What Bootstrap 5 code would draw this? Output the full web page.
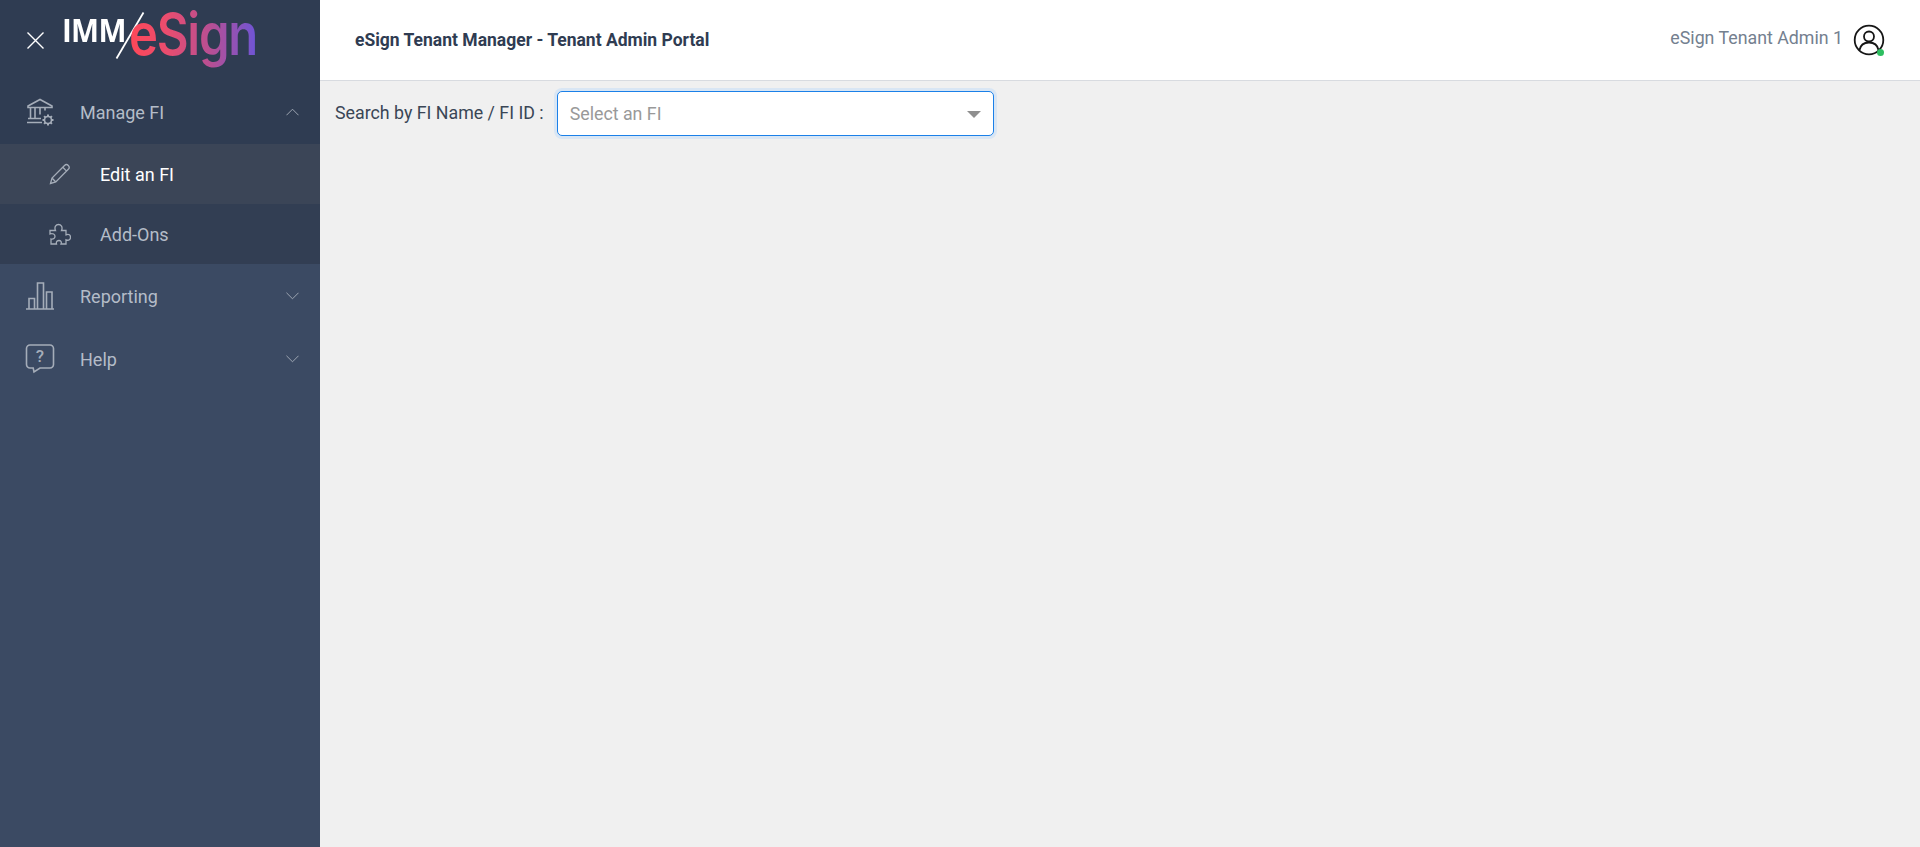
<!DOCTYPE html>
<html lang="en">
<head>
<meta charset="utf-8">
<title>eSign Tenant Manager</title>
<link href="https://cdn.jsdelivr.net/npm/bootstrap@5.3.0/dist/css/bootstrap.min.css" rel="stylesheet">
<style>
html,body{height:100%;overflow:hidden}
body{font-family:Roboto,"Liberation Sans",sans-serif;background:#f0f0f0;color:#2f3c52}
.app-side{width:320px;flex:none;background:#3b4a63}
.side-top{height:80px;background:#2f3c52;padding-left:27px}
.close-x{width:17px;height:17px;flex:none;margin-top:0}
.brand{margin-left:19px;height:80px;position:relative;width:220px}
.imm{position:absolute;left:-1px;top:8px;font:700 33px/44px "Open Sans","Liberation Sans",sans-serif;color:#fff;letter-spacing:-.8px;transform:scaleX(.9);transform-origin:left}
.slash{position:absolute;left:0;top:0}
.esign{position:absolute;left:66px;top:4px;padding-bottom:12px;font:600 58px/60px Inter,"Open Sans",sans-serif;letter-spacing:-1.500px;transform:scaleX(.845);transform-origin:left;background:linear-gradient(90deg,#ff4757 0%,#e94d6f 30%,#b54f95 65%,#6e55d6 100%);-webkit-background-clip:text;background-clip:text;color:transparent}
.menu-row{display:flex;align-items:center;color:#b4bcc8;font-size:18px;text-decoration:none;height:64px;padding-left:25px;padding-right:21px}
.menu-row.top{background:#2f3c52}
.menu-row.last{height:62px}
.menu-ico{width:30px;height:30px;flex:none;margin-right:25px}
.chev{width:13px;height:8px;flex:none;margin-left:auto}
.sub-row{display:flex;align-items:center;color:#b4bcc8;font-size:18px;text-decoration:none;height:60px;background:#323e53;padding-left:49px}
.sub-row.on{background:#3b4557;color:#fff}
.sub-ico{width:22px;height:22px;flex:none;margin-right:29px}
.head-bar{height:81px;background:#fff;border-bottom:1px solid #d8dbe0;padding:0 35px}
.head-title{font-size:17.5px;font-weight:700;color:#2f3c52}
.head-user{font-size:17.8px;color:#74808f;margin-right:10px;padding-bottom:3px}
.user-ico{position:relative;width:32px;height:32px}
.user-dot{position:absolute;right:1px;bottom:0;width:7px;height:7px;border-radius:50%;background:#2dbe60}
.find-row{padding:10px 15px;}
.find-label{font-size:17.8px;color:#3a4656;margin-right:13px}
.find-box{width:437px;height:45px;background:#fff;border:1px solid #1b80e8;border-radius:5px;box-shadow:0 0 0 3px #d9e6f4;padding:1px 12px 0;color:#999;font-size:17.8px}
.caret-ico{margin-left:auto;width:0;height:0;border-left:7px solid transparent;border-right:7px solid transparent;border-top:7px solid #8f8f8f}
</style>
</head>
<body>
<div class="d-flex h-100">
  <nav class="app-side d-flex flex-column">
    <div class="side-top d-flex align-items-center">
      <svg class="close-x" viewBox="0 0 17 17"><path d="M.5.5l16 16M16.500.5l-16 16" stroke="#fff" stroke-width="1.400" fill="none"/></svg>
      <div class="brand">
        <span class="imm">IMM</span>
        <svg class="slash" width="100" height="60" viewBox="0 0 100 60"><path d="M80.500 12.500L53.500 58.500" stroke="#fff" stroke-width="1.800" fill="none"/></svg>
        <span class="esign">eSign</span>
      </div>
    </div>
    <a class="menu-row top" href="#">
      <svg class="menu-ico" viewBox="0 0 30 30" fill="none" stroke="#a5adb9" stroke-width="1.600"><path d="M3 9L15 2.500 27 9v1.500H3zM5.500 10.500v11M10 10.500v11M15 10.500v7M20 10.500v3M3 21.500h13M2 25.500h15"/><circle cx="23" cy="23" r="3.500"/><path d="M23 17.500v2M23 26.500v2M17.500 23h2M26.500 23h2M19.100 19.100l1.400 1.400M25.500 25.500l1.400 1.400M19.100 26.900l1.400-1.400M25.500 20.500l1.400-1.400" stroke-width="2"/></svg>
      <span>Manage FI</span>
      <svg class="chev" viewBox="0 0 14 8" fill="none" stroke="#a5adb9" stroke-width="1"><path d="M.5 7.500L7 1l6.500 6.500"/></svg>
    </a>
    <a class="sub-row on" href="#">
      <svg class="sub-ico" viewBox="0 0 22 22" fill="none" stroke="#a5adb9" stroke-width="1.300"><path d="M1.500 20.500l1.500-5.500L15.500 2.500a2.500 2.500 0 0 1 3.800 3.800L6.800 19zM3 15l3.800 4M13.800 4.300l3.800 3.800"/></svg>
      <span>Edit an FI</span>
    </a>
    <a class="sub-row" href="#">
      <svg class="sub-ico" viewBox="0 0 22 22" fill="none" stroke="#a5adb9" stroke-width="1.300"><path d="M1 7.500h5.500C5 4 7 1.500 9.500 1.500S14 4 12.500 7.500H17v4.300c3-1.300 4.500.5 4.500 2.500s-1.500 3.800-4.500 2.500v4.200h-5c1-2.500-.5-3.500-2-3.500s-3.200 1-2.500 3.500H2v-5c2.500.8 4-1 4-2.700S4 9.800 1 11z"/></svg>
      <span>Add-Ons</span>
    </a>
    <a class="menu-row" href="#">
      <svg class="menu-ico" viewBox="0 0 30 30" fill="none" stroke="#a5adb9" stroke-width="1.600"><path d="M1 28h28M4 27.500V17.500h5.500v10M12.500 27.500V2h6v25.500M21.500 27.500V11h5.500v16.500"/></svg>
      <span>Reporting</span>
      <svg class="chev" viewBox="0 0 14 8" fill="none" stroke="#a5adb9" stroke-width="1"><path d="M.5.500L7 7l6.500-6.500"/></svg>
    </a>
    <a class="menu-row last" href="#">
      <svg class="menu-ico" viewBox="0 0 30 30" fill="none" stroke="#a5adb9" stroke-width="1.600"><path d="M5 1h20a3.500 3.500 0 0 1 3.500 3.500v16A3.500 3.500 0 0 1 25 24H15l-6 4-.8-4H5a3.500 3.500 0 0 1-3.500-3.500v-16A3.500 3.500 0 0 1 5 1z"/><text x="15" y="18" text-anchor="middle" font-family="Roboto,sans-serif" font-size="17" font-weight="500" fill="#a5adb9" stroke="none">?</text></svg>
      <span>Help</span>
      <svg class="chev" viewBox="0 0 14 8" fill="none" stroke="#a5adb9" stroke-width="1"><path d="M.5.500L7 7l6.500-6.500"/></svg>
    </a>
  </nav>
  <div class="flex-grow-1 d-flex flex-column">
    <header class="head-bar d-flex align-items-center justify-content-between">
      <div class="head-title">eSign Tenant Manager - Tenant Admin Portal</div>
      <div class="d-flex align-items-center">
        <span class="head-user">eSign Tenant Admin 1</span>
        <span class="user-ico d-block">
          <svg width="32" height="32" viewBox="0 0 32 32" fill="none" stroke="#161616" stroke-width="1.800"><circle cx="16" cy="16" r="14.300"/><circle cx="16" cy="12.500" r="5"/><path d="M6.500 26c1-5 4.500-7.500 9.500-7.500s8.500 2.500 9.500 7.500"/></svg>
          <span class="user-dot"></span>
        </span>
      </div>
    </header>
    <div class="find-row d-flex align-items-center">
      <span class="find-label">Search by FI Name / FI ID :</span>
      <div class="find-box d-flex align-items-center"><span>Select an FI</span><span class="caret-ico"></span></div>
    </div>
  </div>
</div>
<script src="https://cdn.jsdelivr.net/npm/bootstrap@5.3.0/dist/js/bootstrap.bundle.min.js"></script>
</body>
</html>
